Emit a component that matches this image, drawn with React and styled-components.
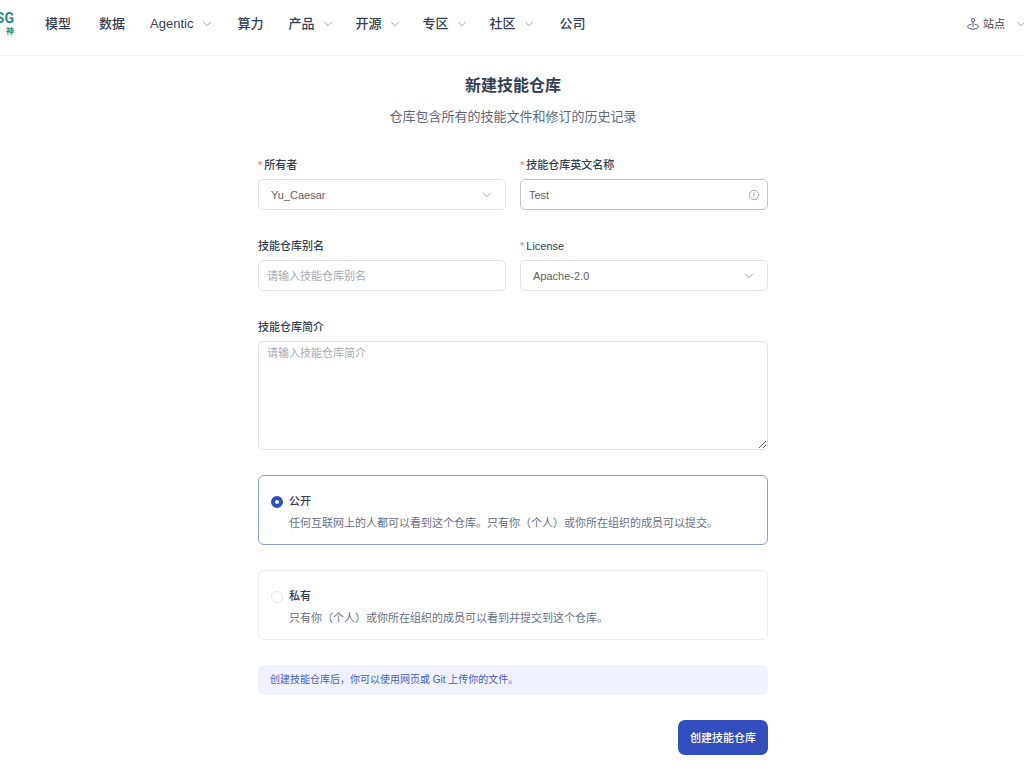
import React, { useState } from 'react';
import styled, { createGlobalStyle } from 'styled-components';

const navItems = [
    { label: '模型' },
    { label: '数据' },
    { label: 'Agentic', menu: true },
    { label: '算力' },
    { label: '产品', menu: true },
    { label: '开源', menu: true },
    { label: '专区', menu: true },
    { label: '社区', menu: true },
    { label: '公司' },
];

const visibilities = [
    {
        value: 'public',
        title: '公开',
        text: '任何互联网上的人都可以看到这个仓库。只有你（个人）或你所在组织的成员可以提交。',
    },
    {
        value: 'private',
        title: '私有',
        text: '只有你（个人）或你所在组织的成员可以看到并提交到这个仓库。',
    },
];

function Chevron() {
    return (
        <ChevronIcon viewBox="0 0 10 10" aria-hidden="true">
            <path d="M1.5 3.2L5 6.7l3.500-3.500" />
        </ChevronIcon>
    )
}

function SiteIcon() {
    return (
        <Icon width="12" height="12" viewBox="0 0 12 12" color="#475467" aria-hidden="true">
            <circle cx="6" cy="2.3" r="1.6" />
            <path d="M6 3.9v4.6" />
            <path d="M4 6.3C2 6.6.7 7.5.7 8.6c0 1.5 2.3 2.5 5.3 2.5s5.3-1 5.3-2.5c0-1.100-1.300-2-3.300-2.300" />
        </Icon>
    )
}

function Header() {
    return (
        <Bar>
            <Logo href="#" aria-label="OpenCSG">
                <LogoName>SG</LogoName>
                <LogoSub>神</LogoSub>
            </Logo>
            <Nav>
                {navItems.map(item => item.menu
                    ? <NavButton key={item.label} type="button">{item.label}<Chevron /></NavButton>
                    : <NavLink key={item.label} href="#">{item.label}</NavLink>
                )}
            </Nav>
            <SiteButton type="button">
                <SiteIcon />
                <span>站点</span>
                <Chevron />
            </SiteButton>
        </Bar>
    )
}

function SelectField({ id, label, options }) {
    return (
        <Field>
            <Label htmlFor={id} $required>{label}</Label>
            <Control>
                <Select id={id}>
                    {options.map(option => <option key={option}>{option}</option>)}
                </Select>
                <Suffix $inset={14}><Chevron /></Suffix>
            </Control>
        </Field>
    )
}

function App() {
    const [name, setName] = useState('Test');
    const [visibility, setVisibility] = useState('public');

    return (
        <>
            <GlobalStyle />
            <Header />
            <Main>
                <Title>新建技能仓库</Title>
                <Subtitle>仓库包含所有的技能文件和修订的历史记录</Subtitle>
                <Form onSubmit={e => e.preventDefault()}>
                    <Fields>
                        <SelectField id="owner" label="所有者" options={['Yu_Caesar']} />
                        <Field>
                            <Label htmlFor="name" $required>技能仓库英文名称</Label>
                            <Control>
                                <Input id="name" value={name} onChange={e => setName(e.target.value)} $active />
                                <Suffix $inset={8}>
                                    <Icon width="12" height="12" viewBox="0 0 12 12" color="#a8abb2" aria-hidden="true">
                                        <circle cx="6" cy="6" r="4.7" />
                                        <path d="M6 3.6v2.8M6 8.2v.2" />
                                    </Icon>
                                </Suffix>
                            </Control>
                        </Field>
                        <Field>
                            <Label htmlFor="alias">技能仓库别名</Label>
                            <Control>
                                <Input id="alias" placeholder="请输入技能仓库别名" />
                            </Control>
                        </Field>
                        <SelectField id="license" label="License" options={['Apache-2.0']} />
                        <Field $wide>
                            <Label htmlFor="intro">技能仓库简介</Label>
                            <TextArea id="intro" placeholder="请输入技能仓库简介" />
                        </Field>
                    </Fields>
                    {visibilities.map(item => (
                        <Card key={item.value} $checked={visibility === item.value}>
                            <Radio type="radio"
                                name="visibility"
                                value={item.value}
                                checked={visibility === item.value}
                                onChange={() => setVisibility(item.value)} />
                            <span>
                                <CardTitle>{item.title}</CardTitle>
                                <CardText>{item.text}</CardText>
                            </span>
                        </Card>
                    ))}
                    <Notice>创建技能仓库后，你可以使用网页或 Git 上传你的文件。</Notice>
                    <Submit type="submit">创建技能仓库</Submit>
                </Form>
            </Main>
        </>
    )
}

const GlobalStyle = createGlobalStyle`
    *, *::before, *::after {
        box-sizing: border-box;
    }

    body {
        margin: 0;
        background: #fff;
        color: #344054;
        font-size: 11px;
    }

    body, button, input, select, textarea {
        font-family: 'Liberation Sans', 'Noto Sans CJK SC', sans-serif;
    }
`;

const Icon = styled.svg`
    flex: none;
    fill: none;
    stroke: currentColor;
    stroke-linecap: round;
`;

const ChevronIcon = styled(Icon)`
    width: 10px;
    height: 10px;
    color: #a0a4ab;
    stroke-linejoin: round;
`;

const Bar = styled.header`
    display: flex;
    align-items: center;
    height: 56px;
    padding-bottom: 8px;
    border-bottom: 1px solid #f2f4f7;
    overflow: hidden;
`;

const Logo = styled.a`
    display: flex;
    flex-direction: column;
    align-items: flex-end;
    width: 14px;
    margin-right: 17px;
    overflow: hidden;
    color: #2b8a76;
    font-weight: 700;
    text-decoration: none;
`;

const LogoName = styled.span`
    font-family: Roboto, sans-serif;
    font-size: 14px;
    line-height: 16px;
`;

const LogoSub = styled.span`
    font-size: 8px;
    line-height: 12px;
`;

const Nav = styled.nav`
    display: flex;
    flex: 1;
`;

const NavLink = styled.a`
    padding: 0 14px;
    color: #344054;
    font-size: 13px;
    font-weight: 500;
    line-height: 20px;
    text-decoration: none;
    white-space: nowrap;
`;

const NavButton = styled.button`
    display: flex;
    align-items: center;
    gap: 9px;
    padding: 0 11px;
    border: 0;
    background: none;
    color: #344054;
    font-size: 13px;
    font-weight: 500;
    line-height: 20px;
    white-space: nowrap;
`;

const SiteButton = styled(NavButton)`
    gap: 4px;
    margin-right: -2px;
    padding: 0;
    color: #606266;
    font-size: 11px;

    span {
        margin-right: 7px;
    }
`;

const Main = styled.main`
    max-width: 542px;
    margin: 0 auto;
    padding: 20px 15px 24px 17px;
`;

const Title = styled.h1`
    margin: 0 0 12px;
    font-size: 16px;
    font-weight: 700;
    line-height: 20px;
    text-align: center;
`;

const Subtitle = styled.p`
    margin: 0 0 31px;
    color: #606980;
    font-size: 13px;
    line-height: 18px;
    text-align: center;
`;

const Form = styled.form`
    display: flex;
    flex-direction: column;
    gap: 25px;
`;

const Fields = styled.div`
    display: grid;
    grid-template-columns: 1fr 1fr;
    gap: 28px 14px;
`;

const Field = styled.div`
    display: flex;
    flex-direction: column;
    gap: 6px;
    min-width: 0;
    grid-column: ${props => props.$wide ? '1 / -1' : 'auto'};
`;

const Label = styled.label`
    font-weight: 500;
    line-height: 16px;

    &::before {
        content: ${props => props.$required ? "'*'" : 'none'};
        margin-right: 2px;
        color: #f56c6c;
    }
`;

const Control = styled.div`
    display: grid;
    align-items: center;

    > * {
        grid-area: 1 / 1;
    }
`;

const Input = styled.input`
    width: 100%;
    height: 31px;
    padding: 0 8px;
    border: 1px solid ${props => props.$active ? '#c0c4cc' : '#e1e3e8'};
    border-radius: 5px;
    outline: 0;
    background: #fff;
    color: #606266;
    font-size: 11px;

    &::placeholder {
        color: #a8abb2;
    }
`;

const Select = styled(Input).attrs({ as: 'select' })`
    padding: 0 28px 0 12px;
    appearance: none;
`;

const Suffix = styled.span`
    display: flex;
    justify-self: end;
    margin-right: ${props => props.$inset}px;
    pointer-events: none;
`;

const TextArea = styled(Input).attrs({ as: 'textarea' })`
    display: block;
    height: 109px;
    padding: 3px 8px;
    line-height: 16px;
    resize: vertical;
`;

const Card = styled.label`
    display: flex;
    align-items: flex-start;
    gap: 6px;
    padding: 14px 12px 10px;
    border: 1px solid ${props => props.$checked ? '#8c9cd8' : '#eaecf0'};
    border-radius: 6px;
    line-height: 22px;
`;

const Radio = styled.input`
    flex: none;
    width: 12px;
    height: 12px;
    margin: 6px 0 0;
    border: 1px solid #e4e7ec;
    border-radius: 50%;
    appearance: none;

    &:checked {
        border: 4px solid #3250bd;
    }
`;

const CardTitle = styled.span`
    display: block;
    font-weight: 500;
`;

const CardText = styled.span`
    display: block;
    color: #667085;
`;

const Notice = styled.p`
    margin: 0;
    padding: 0 12px;
    border-radius: 6px;
    background: #f0f3ff;
    color: #4560cc;
    font-size: 10px;
    line-height: 30px;
`;

const Submit = styled.button`
    align-self: flex-end;
    height: 35px;
    padding: 0 12px 2px;
    border: 0;
    border-radius: 7px;
    background: #3250bd;
    color: #fff;
    font-size: 11px;
    font-weight: 500;
`;

export default App;
